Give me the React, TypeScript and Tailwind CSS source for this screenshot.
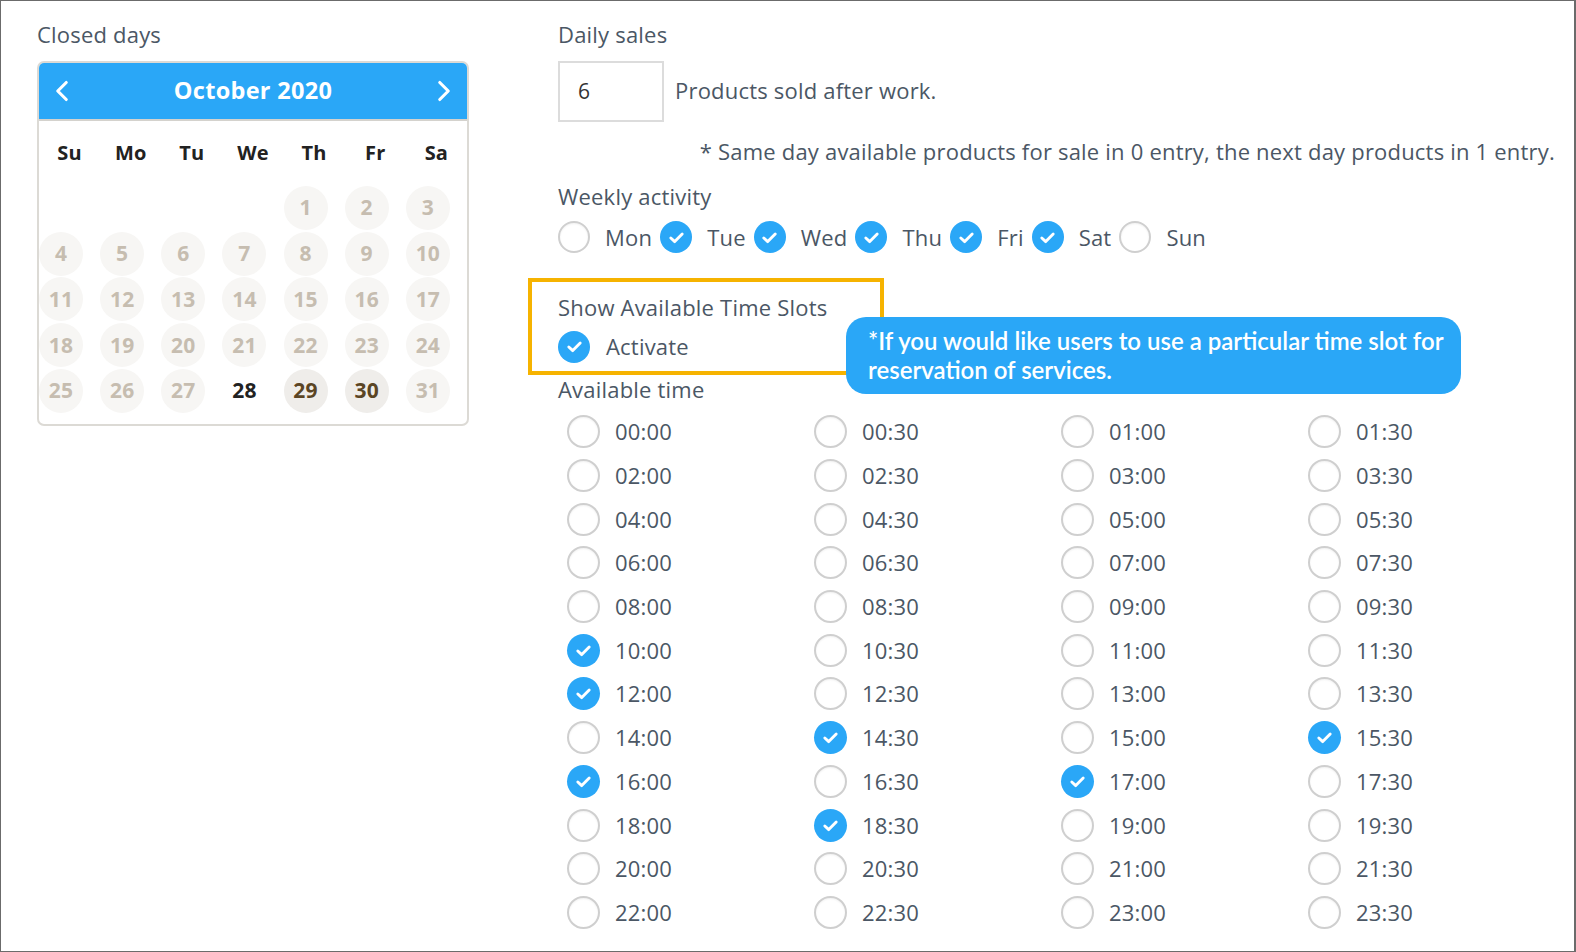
import { ChevronLeft, ChevronRight } from "lucide-react";

const weekdays = ["Su", "Mo", "Tu", "We", "Th", "Fr", "Sa"];

const weekly: [string, boolean][] = [
  ["Mon", false],
  ["Tue", true],
  ["Wed", true],
  ["Thu", true],
  ["Fri", true],
  ["Sat", true],
  ["Sun", false],
];

const checkedTimes = ["10:00", "12:00", "14:30", "15:30", "16:00", "17:00", "18:30"];

const times: string[] = [];
for (let h = 0; h < 24; h++) {
  const hh = String(h).padStart(2, "0");
  times.push(`${hh}:00`, `${hh}:30`);
}

function Check({ on, size = "w-[33px] h-[33px]" }: { on: boolean; size?: string }) {
  if (on) {
    return (
      <span className={`${size} shrink-0 rounded-full bg-[#2aa7f7] flex items-center justify-center`}>
        <svg viewBox="0 0 24 24" className="w-[21px] h-[21px]" fill="none" stroke="white" strokeWidth="3.3" strokeLinecap="round" strokeLinejoin="round">
          <path d="M5.5 12.5l4.5 4.2L18.5 8" />
        </svg>
      </span>
    );
  }
  return (
    <span className={`${size} shrink-0 rounded-full bg-white border-2 border-[#cfcfcf] shadow-[inset_0_1px_2px_rgba(0,0,0,0.06)]`} />
  );
}

function Calendar() {
  const cells: (number | null)[] = [null, null, null, null];
  for (let d = 1; d <= 31; d++) cells.push(d);
  return (
    <div className="w-[432px] border-2 border-[#dcdad5] rounded-[7px] overflow-hidden bg-white font-['Open_Sans',sans-serif] font-bold">
      <div className="h-[58px] bg-[#2aa7f7] border-b-2 border-[#d4d2cd] flex items-center justify-between px-[6px] text-white">
        <ChevronLeft className="w-[34px] h-[34px]" strokeWidth={2.2} />
        <span className="text-[23.5px] tracking-[0.3px]">October 2020</span>
        <ChevronRight className="w-[34px] h-[34px]" strokeWidth={2.2} />
      </div>
      <div className="grid grid-cols-7 h-[64px] items-center text-[20px] text-[#222]">
        {weekdays.map((w) => (
          <div key={w} className="text-center">{w}</div>
        ))}
      </div>
      <div className="grid grid-cols-7 pb-[10px]">
        {cells.map((d, i) => {
          let cls = "bg-[#f7f6f4] text-[#c6bdb0]";
          if (d === 28) cls = "text-[#222]";
          if (d === 29 || d === 30) cls = "bg-[#efedea] text-[#5b4524]";
          return (
            <div key={i} className="h-[45.8px] flex items-center">
              {d !== null && (
                <span className={`w-[44px] h-[44px] rounded-full flex items-center justify-center text-[21px] ${cls}`}>{d}</span>
              )}
            </div>
          );
        })}
      </div>
    </div>
  );
}

export default function App() {
  return (
    <div className="w-[1576px] h-[952px] bg-white border border-r-2 border-[#6b6b6b] flex relative font-['Open_Sans',sans-serif] text-[#4b5765] text-[22px] tracking-[0.2px] overflow-hidden">
      {/* Left column */}
      <div className="w-[520px] shrink-0 pl-[36px] pt-[19px]">
        <div className="h-[28px] leading-[28px] mb-[13px]">Closed days</div>
        <Calendar />
      </div>

      {/* Right column */}
      <div className="flex-1 pl-[37px] pr-[29px] pt-[19px]">
        <div className="h-[28px] leading-[28px] mb-[13px]">Daily sales</div>
        <div className="flex items-center gap-[11px]">
          <div className="w-[106px] h-[61px] border-2 border-[#dcdcdc] flex items-center pl-[18px] text-[#333] text-[21px]">6</div>
          <span className="-mt-[3px]">Products sold after work.</span>
        </div>
        <div className="text-right h-[28px] leading-[28px] mt-[15px]">
          * Same day available products for sale in 0 entry, the next day products in 1 entry.
        </div>
        <div className="h-[28px] leading-[28px] mt-[17px]">Weekly activity</div>
        <div className="flex items-center mt-[10px] h-[34px]">
          {weekly.map(([label, on], i) => (
            <div key={label} className="flex items-center">
              <Check on={on} size="w-[32px] h-[32px]" />
              <span className={`ml-[15px] ${i < weekly.length - 1 ? "mr-[8px]" : ""}`}>{label}</span>
            </div>
          ))}
        </div>

        {/* Highlighted activation box */}
        <div className="ml-[-30px] mt-[24px] w-[356px] h-[97px] border-4 border-[#f6b300] pl-[26px] pt-[11px]">
          <div className="h-[28px] leading-[28px]">Show Available Time Slots</div>
          <div className="flex items-center mt-[9px]">
            <Check on={true} size="w-[32px] h-[32px]" />
            <span className="ml-[16px]">Activate</span>
          </div>
        </div>
        <div className="h-[28px] leading-[28px] mt-0">Available time</div>

        <div className="grid grid-cols-[247px_247px_247px_247px] ml-[9px] mt-[7px]">
          {times.map((t) => (
            <div key={t} className="h-[43.7px] flex items-center">
              <Check on={checkedTimes.includes(t)} />
              <span className="ml-[15px]">{t}</span>
            </div>
          ))}
        </div>
      </div>

      {/* Tooltip bubble */}
      <div className="absolute left-[845px] top-[316px] w-[615px] h-[77px] rounded-[20px] bg-[#2aa7f7] text-white font-['Lato',sans-serif] font-semibold text-[24px] leading-[29px] tracking-normal pl-[22px] pt-[9px]">
        *If you would like users to use a particular time slot for
        <br />
        reservation of services.
      </div>
    </div>
  );
}
